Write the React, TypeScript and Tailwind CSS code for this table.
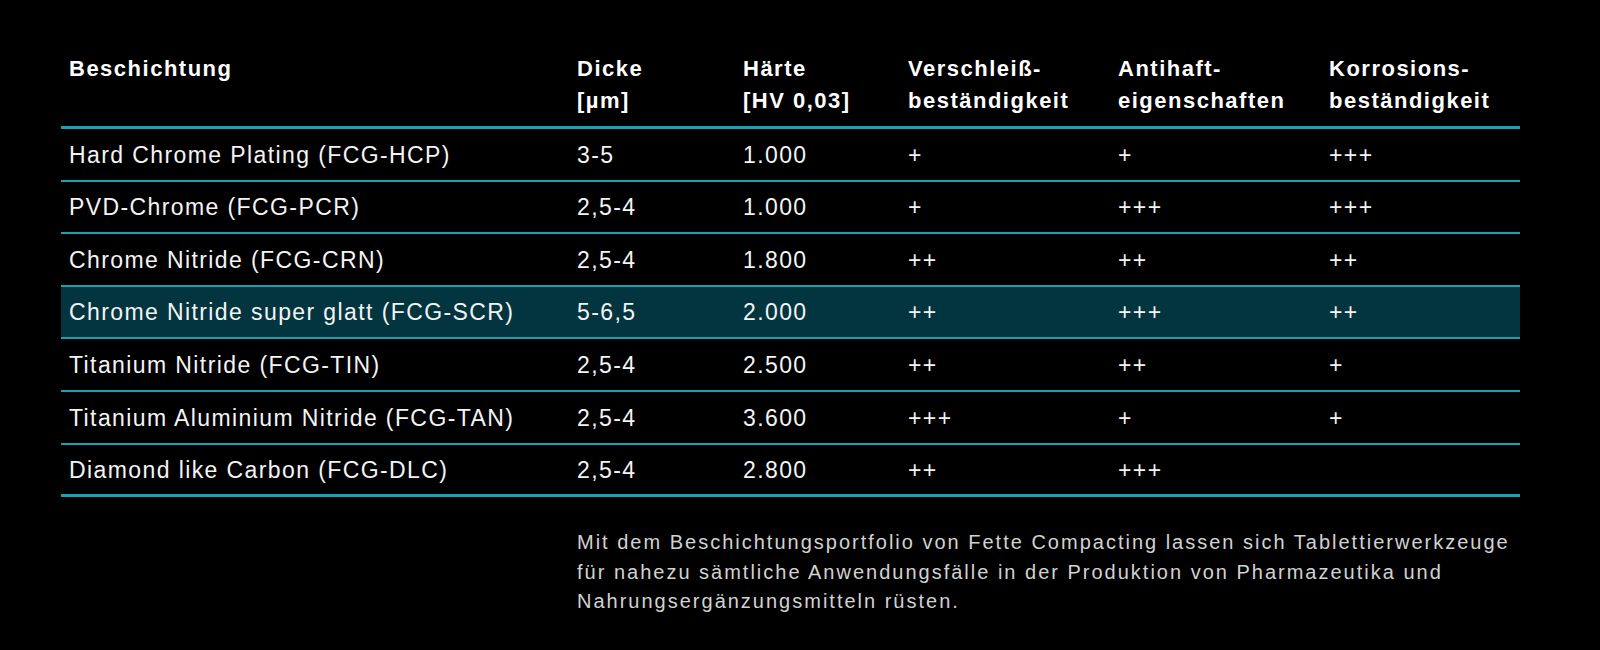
import React from "react";

const rows: { name: string; d: string; h: string; v: string; a: string; k: string; hl?: boolean }[] = [
  { name: "Hard Chrome Plating (FCG-HCP)", d: "3-5", h: "1.000", v: "+", a: "+", k: "+++" },
  { name: "PVD-Chrome (FCG-PCR)", d: "2,5-4", h: "1.000", v: "+", a: "+++", k: "+++" },
  { name: "Chrome Nitride (FCG-CRN)", d: "2,5-4", h: "1.800", v: "++", a: "++", k: "++" },
  { name: "Chrome Nitride super glatt (FCG-SCR)", d: "5-6,5", h: "2.000", v: "++", a: "+++", k: "++", hl: true },
  { name: "Titanium Nitride (FCG-TIN)", d: "2,5-4", h: "2.500", v: "++", a: "++", k: "+" },
  { name: "Titanium Aluminium Nitride (FCG-TAN)", d: "2,5-4", h: "3.600", v: "+++", a: "+", k: "+" },
  { name: "Diamond like Carbon (FCG-DLC)", d: "2,5-4", h: "2.800", v: "++", a: "+++", k: "" },
];

const headers: [string, string][] = [
  ["Beschichtung", ""],
  ["Dicke", "[µm]"],
  ["Härte", "[HV 0,03]"],
  ["Verschleiß-", "beständigkeit"],
  ["Antihaft-", "eigenschaften"],
  ["Korrosions-", "beständigkeit"],
];

const grid = "grid grid-cols-[508px_166px_165px_210px_211px_199px]";

export default function App() {
  return (
    <div
      className="w-[1600px] h-[650px] bg-black overflow-hidden pt-[53px]"
      style={{ fontFamily: '"Liberation Sans", Arial, Helvetica, sans-serif' }}
    >
      <div className="ml-[61px] w-[1459px]">
        <div className={`${grid} border-b-[3px] border-[#1a9fb5] pb-[9px]`}>
          {headers.map(([a, b], i) => (
            <div key={i} className="pl-[8px] text-white font-bold text-[22px] leading-[32px] tracking-[1.5px]">
              <div>{a}</div>
              <div>{b || "\u00a0"}</div>
            </div>
          ))}
        </div>
        {rows.map((r, i) => (
          <div
            key={i}
            className={`${grid} h-[52.6px] items-center border-b-[#1a9fb5] ${
              i === rows.length - 1 ? "border-b-[3px]" : "border-b-2"
            } ${r.hl ? "bg-[#02353f]" : ""} text-[#f4f4f4] text-[23px] tracking-[1.4px]`}
          >
            <div className="pl-[8px] pt-[1px]">{r.name}</div>
            <div className="pl-[8px] pt-[1px]">{r.d}</div>
            <div className="pl-[8px] pt-[1px]">{r.h}</div>
            <div className="pl-[8px] pt-[1px]">{r.v}</div>
            <div className="pl-[8px] pt-[1px]">{r.a}</div>
            <div className="pl-[8px] pt-[1px]">{r.k}</div>
          </div>
        ))}
        <div className="flex">
          <div className="w-[516px] shrink-0" />
          <p className="mt-[31px] w-[944px] text-[20px] leading-[29.5px] tracking-[2px] text-[#d2d2d2]">
            Mit dem Beschichtungsportfolio von Fette Compacting lassen sich Tablettierwerkzeuge für nahezu sämtliche
            Anwendungsfälle in der Produktion von Pharmazeutika und Nahrungsergänzungsmitteln rüsten.
          </p>
        </div>
      </div>
    </div>
  );
}
